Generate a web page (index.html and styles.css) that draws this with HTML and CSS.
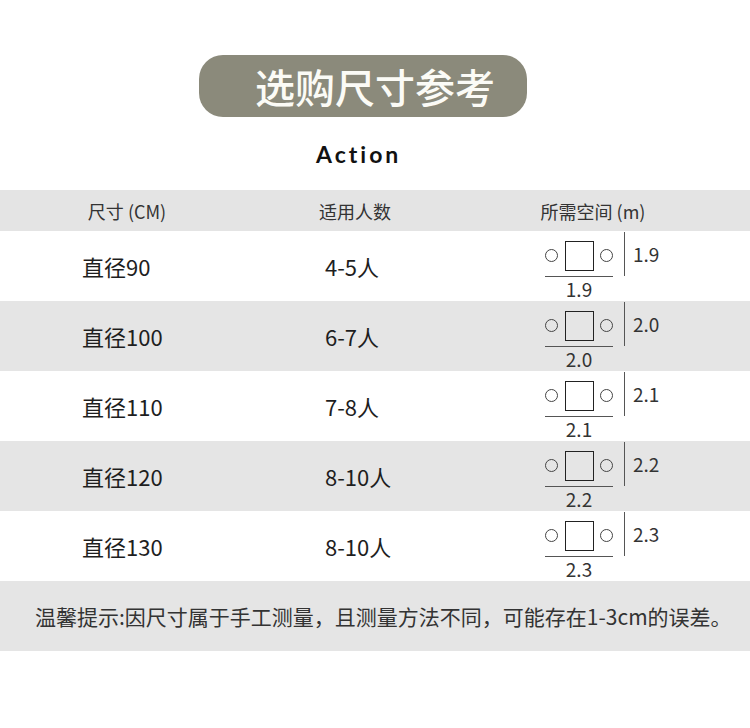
FILE: index.html
```html
<!DOCTYPE html>
<html lang="zh">
<head>
<meta charset="utf-8">
<link rel="stylesheet" href="styles.css">
</head>
<body>
<div class="page">
  <div class="pill">选购尺寸参考</div>
  <div class="brand">Action</div>

  <div class="head">
    <span class="h1">尺寸 (CM)</span>
    <span class="h2">适用人数</span>
    <span class="h3">所需空间 (m)</span>
  </div>

  <div class="row">
    <div class="c1">直径90</div>
    <div class="c2">4-5人</div>
    <div class="diag">
      <div class="plan">
        <div class="shapes"><i class="ring"></i><i class="sq"></i><i class="ring"></i></div>
        <div class="hline"></div>
        <div class="blabel">1.9</div>
      </div>
      <div class="vline"></div>
      <div class="rlabel">1.9</div>
    </div>
  </div>

  <div class="row alt">
    <div class="c1">直径100</div>
    <div class="c2">6-7人</div>
    <div class="diag">
      <div class="plan">
        <div class="shapes"><i class="ring"></i><i class="sq"></i><i class="ring"></i></div>
        <div class="hline"></div>
        <div class="blabel">2.0</div>
      </div>
      <div class="vline"></div>
      <div class="rlabel">2.0</div>
    </div>
  </div>

  <div class="row">
    <div class="c1">直径110</div>
    <div class="c2">7-8人</div>
    <div class="diag">
      <div class="plan">
        <div class="shapes"><i class="ring"></i><i class="sq"></i><i class="ring"></i></div>
        <div class="hline"></div>
        <div class="blabel">2.1</div>
      </div>
      <div class="vline"></div>
      <div class="rlabel">2.1</div>
    </div>
  </div>

  <div class="row alt">
    <div class="c1">直径120</div>
    <div class="c2">8-10人</div>
    <div class="diag">
      <div class="plan">
        <div class="shapes"><i class="ring"></i><i class="sq"></i><i class="ring"></i></div>
        <div class="hline"></div>
        <div class="blabel">2.2</div>
      </div>
      <div class="vline"></div>
      <div class="rlabel">2.2</div>
    </div>
  </div>

  <div class="row">
    <div class="c1">直径130</div>
    <div class="c2">8-10人</div>
    <div class="diag">
      <div class="plan">
        <div class="shapes"><i class="ring"></i><i class="sq"></i><i class="ring"></i></div>
        <div class="hline"></div>
        <div class="blabel">2.3</div>
      </div>
      <div class="vline"></div>
      <div class="rlabel">2.3</div>
    </div>
  </div>

  <div class="note">温馨提示:因尺寸属于手工测量，且测量方法不同，可能存在1-3cm的误差。</div>
</div>
</body>
</html>
```
FILE: styles.css
```css
html, body {
  margin: 0;
  padding: 0;
  background: #ffffff;
}
body {
  font-family: "Noto Sans CJK SC", "Noto Sans", sans-serif;
  color: #222222;
}
.page {
  width: 750px;
  height: 728px;
  padding-top: 55px;
  box-sizing: border-box;
}
.pill {
  width: 328px;
  height: 62px;
  margin-left: 199px;
  box-sizing: border-box;
  padding-left: 56px;
  border-radius: 24px;
  background: #8b8a7b;
  color: #fbfbf6;
  font-size: 40px;
  font-weight: 500;
  line-height: 62px;
  display: flex;
  align-items: center;
}
.brand {
  width: 750px;
  padding-left: 316px;
  box-sizing: border-box;
  margin-top: 23px;
  height: 28px;
  line-height: 28px;
  font-family: "Lato", sans-serif;
  font-weight: 700;
  font-size: 23px;
  letter-spacing: 3px;
  color: #111111;
}
.head {
  margin-top: 22px;
  height: 41px;
  background: #e4e4e4;
  display: flex;
  align-items: center;
  font-size: 18px;
  color: #333333;
}
.head span {
  text-align: center;
}
.h1 { width: 254px; }
.h2 { width: 202px; }
.h3 { width: 274px; }
.row {
  height: 70px;
  display: flex;
  align-items: center;
  font-size: 22px;
  font-weight: 400;
  color: #1e1e1e;
}
.row.alt {
  background: #e5e5e5;
}
.c1 {
  width: 243px;
  padding-left: 82px;
}
.c2 {
  width: 220px;
}
.diag {
  align-self: stretch;
  display: flex;
  font-size: 19px;
  font-weight: 400;
  color: #333333;
}
.plan {
  width: 68px;
  display: flex;
  flex-direction: column;
}
.shapes {
  margin-top: 9px;
  height: 31px;
  display: flex;
  align-items: center;
  justify-content: space-between;
}
.ring {
  width: 11px;
  height: 11px;
  border: 1px solid #444444;
  border-radius: 50%;
}
.sq {
  width: 27px;
  height: 28px;
  border: 1px solid #222222;
  background: #ffffff;
}
.alt .sq {
  background: #e5e5e5;
}
.hline {
  margin-top: 5px;
  height: 1px;
  background: #555555;
}
.blabel {
  text-align: center;
  line-height: 24px;
}
.vline {
  width: 1px;
  height: 44px;
  margin-left: 11px;
  margin-top: 1px;
  background: #555555;
}
.rlabel {
  margin-left: 8px;
  margin-top: 11px;
  line-height: 24px;
}
.note {
  height: 70px;
  background: #e5e5e5;
  display: flex;
  align-items: center;
  padding-left: 35px;
  font-size: 21px;
  color: #333333;
}
```
